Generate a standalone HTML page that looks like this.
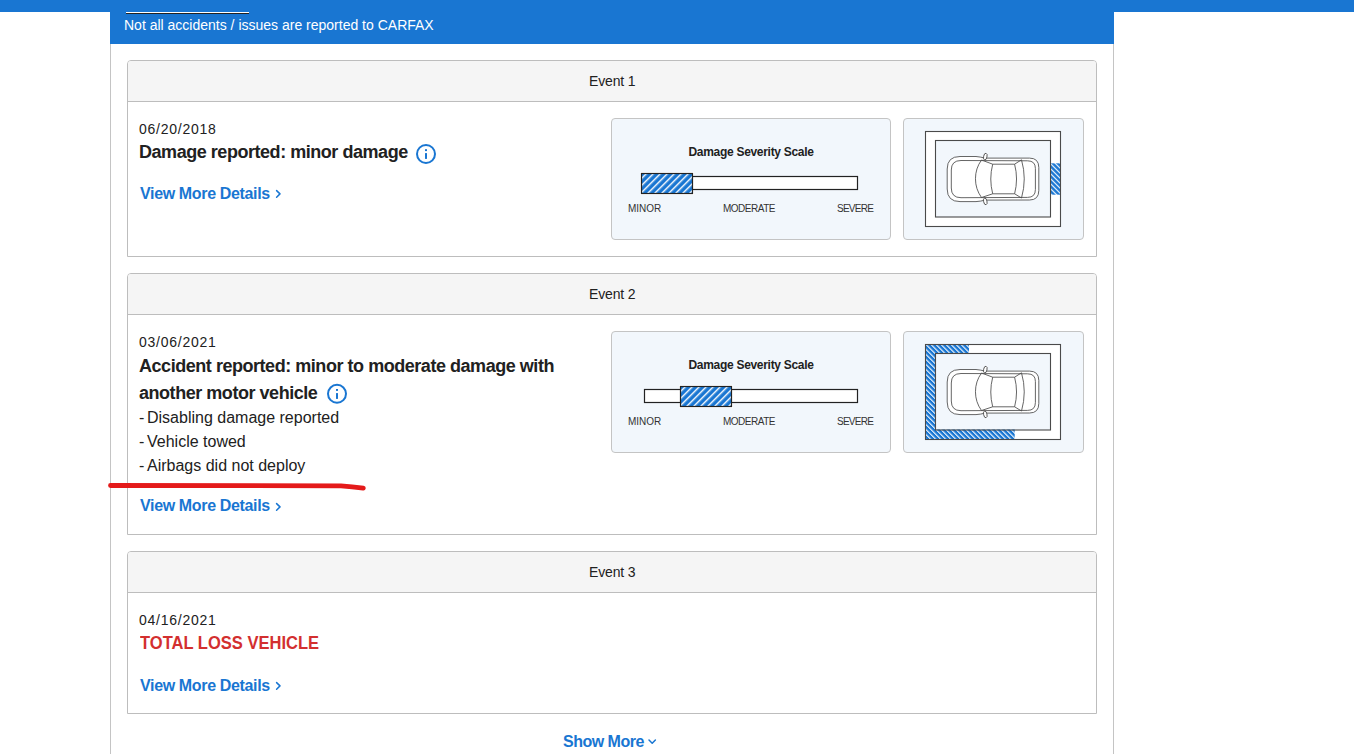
<!DOCTYPE html>
<html><head><meta charset="utf-8">
<style>
*{box-sizing:border-box;margin:0;padding:0}
html,body{width:1354px;height:754px;overflow:hidden;background:#fff;font-family:"Liberation Sans",sans-serif;color:#212121}
.a{position:absolute;white-space:nowrap;line-height:1}
.topbar{position:absolute;left:0;top:0;width:1354px;height:12px;background:#1976d2}
.container{position:absolute;left:110px;top:0;width:1004px;height:800px;border-left:1px solid #c4c4c4;border-right:1px solid #c4c4c4}
.banner{position:absolute;left:110px;top:0;width:1004px;height:44px;background:#1976d2}
.card{position:absolute;left:127px;width:970px;border:1px solid #bdbdbd;border-radius:4px 4px 0 0;background:#fff}
.card .hd{height:41px;background:#f5f5f5;border-bottom:1px solid #bdbdbd;border-radius:3px 3px 0 0}
.sev{position:absolute;left:611px;width:280px;height:122px;background:#f2f7fc;border:1px solid #c4c4c4;border-radius:4px}
.diag{position:absolute;left:903px;width:181px;height:122px;background:#f2f7fc;border:1px solid #c4c4c4;border-radius:4px}
.ev{font-size:14px;color:#212121;left:589px;letter-spacing:-0.15px}
.date{font-size:14px;letter-spacing:0.75px;left:139px}
.title{font-size:18px;font-weight:bold;letter-spacing:-0.46px;left:139px}
.vmd{font-size:16px;font-weight:bold;color:#1976d2;left:140px;letter-spacing:-0.35px}
.bul{font-size:16px}
.sst{font-size:12px;font-weight:bold;left:688.5px;letter-spacing:-0.3px}
.lbl{font-size:10px;color:#333}
svg{position:absolute;left:0;top:0}
</style></head><body>
<div class="container"></div>
<div class="topbar"></div>
<div class="banner"></div>
<div class="a" style="left:126px;top:12px;width:123px;height:1px;background:#fff"></div>
<div class="a" style="left:126px;top:13px;width:123px;height:1px;background:#222"></div>
<div class="a" style="left:124px;top:18px;font-size:14px;color:#fff">Not all accidents / issues are reported to CARFAX</div>

<div class="card" style="top:60px;height:197px"><div class="hd"></div></div>
<div class="card" style="top:273px;height:262px"><div class="hd"></div></div>
<div class="card" style="top:551px;height:163px"><div class="hd"></div></div>

<div class="sev" style="top:118px"></div>
<div class="diag" style="top:118px"></div>
<div class="sev" style="top:331px"></div>
<div class="diag" style="top:331px"></div>

<div class="a ev" style="top:74px">Event 1</div>
<div class="a ev" style="top:287px">Event 2</div>
<div class="a ev" style="top:565px">Event 3</div>

<div class="a date" style="top:122px">06/20/2018</div>
<div class="a title" style="top:143px">Damage reported: minor damage</div>
<div class="a vmd" style="top:186px">View More Details</div>

<div class="a date" style="top:335px">03/06/2021</div>
<div class="a title" style="top:357px">Accident reported: minor to moderate damage with</div>
<div class="a title" style="top:384px">another motor vehicle</div>
<div class="a bul" style="left:139px;top:410px">-</div><div class="a bul" style="left:147px;top:410px">Disabling damage reported</div>
<div class="a bul" style="left:139px;top:434px">-</div><div class="a bul" style="left:147px;top:434px">Vehicle towed</div>
<div class="a bul" style="left:139px;top:458px">-</div><div class="a bul" style="left:147px;top:458px">Airbags did not deploy</div>
<div class="a vmd" style="top:498px">View More Details</div>

<div class="a date" style="top:613px">04/16/2021</div>
<div class="a title" style="left:140px;top:634px;color:#d32f2f;letter-spacing:0;transform:scaleX(0.918);transform-origin:0 0">TOTAL LOSS VEHICLE</div>
<div class="a vmd" style="top:678px">View More Details</div>

<div class="a vmd" style="left:563px;top:734px;letter-spacing:-0.5px">Show More</div>

<div class="a sst" style="top:146px">Damage Severity Scale</div>
<div class="a lbl" style="left:628px;top:204px">MINOR</div>
<div class="a lbl" style="left:723px;top:204px;letter-spacing:-0.5px">MODERATE</div>
<div class="a lbl" style="left:837px;top:204px;letter-spacing:-0.75px">SEVERE</div>
<div class="a sst" style="top:359px">Damage Severity Scale</div>
<div class="a lbl" style="left:628px;top:417px">MINOR</div>
<div class="a lbl" style="left:723px;top:417px;letter-spacing:-0.5px">MODERATE</div>
<div class="a lbl" style="left:837px;top:417px;letter-spacing:-0.75px">SEVERE</div>


<svg width="1354" height="754" viewBox="0 0 1354 754">
<defs>
<pattern id="hb" patternUnits="userSpaceOnUse" width="4.95" height="10" patternTransform="rotate(45)">
<rect x="0" y="0" width="4.95" height="10" fill="#1976d2"/><rect x="0" y="0" width="1.4" height="10" fill="#fff"/>
</pattern>
<pattern id="hd" patternUnits="userSpaceOnUse" width="3.54" height="10" patternTransform="rotate(-45)">
<rect x="0" y="0" width="3.54" height="10" fill="#1976d2"/><rect x="0" y="0" width="1.1" height="10" fill="#fff"/>
</pattern>
<g id="car" fill="none" stroke="#4a4a4a" stroke-width="0.85">
<path fill="#fff" d="M960,156.5 L976,156.5 Q981,157 985,158.1 L1029.5,158.1 Q1038.8,158.1 1038.8,167.5 L1038.8,190.5 Q1038.8,200 1029.5,200 L985,200.1 Q981,201.3 976,201.6 L960,201.6 Q947.2,201.6 947.2,189 L947.2,169 Q947.2,156.5 960,156.5 Z"/>
<path d="M961,160.5 L1027.5,160.8 Q1035.4,160.8 1035.4,168.5 L1035.4,189.5 Q1035.4,197.4 1027.5,197.4 L961,197.7 Q951.3,197.7 951.3,188 L951.3,170 Q951.3,160.5 961,160.5 Z"/>
<path d="M981.5,160 A32.1,32.1 0 0 0 981.5,197.5"/>
<path d="M981.5,160 L992.7,164.2 M981.5,197.5 L992.7,193.8"/>
<path d="M992.7,164.2 A58.6,58.6 0 0 0 992.7,193.8 L1014.6,193.8 A58.6,58.6 0 0 0 1014.6,164.2 Z"/>
<path d="M1014.6,164.2 L1021.5,159.8 M1014.6,193.8 L1021.5,198"/>
<path d="M1021.5,159.8 A68.9,68.9 0 0 1 1021.5,198"/>
<ellipse cx="985.3" cy="156.6" rx="1.7" ry="3.4" fill="#fff" transform="rotate(12 985.3 156.6)"/>
<ellipse cx="985.3" cy="201.4" rx="1.7" ry="3.4" fill="#fff" transform="rotate(-12 985.3 201.4)"/>
</g>
</defs>

<!-- info icons -->
<g fill="none" stroke="#1976d2" stroke-width="2">
<circle cx="426" cy="154" r="9"/>
<circle cx="337" cy="393.8" r="9"/>
</g>
<g fill="#1976d2">
<rect x="425" y="149.2" width="2" height="1.9"/><rect x="425" y="153.1" width="2" height="5.8"/>
<rect x="336" y="389" width="2" height="1.9"/><rect x="336" y="393.1" width="2" height="5.8"/>
</g>
<!-- chevrons -->
<g fill="none" stroke="#1976d2" stroke-width="1.5" stroke-linecap="round" stroke-linejoin="round">
<path d="M276.6,190.6 L280,193.9 L276.6,197.2"/>
<path d="M276.6,503.6 L280,506.9 L276.6,510.2"/>
<path d="M276.6,682.6 L280,685.9 L276.6,689.2"/>
<path d="M649,740 L652.2,743.2 L655.4,740" stroke-width="1.5"/>
</g>

<!-- severity bars -->
<g stroke="#222" stroke-width="1.2">
<rect x="641.5" y="173.5" width="51" height="20" fill="#fff" stroke="#fff" stroke-width="3"/>
<rect x="644.5" y="176.5" width="213" height="13" fill="#fff"/>
<rect x="641.5" y="173.5" width="51" height="20" fill="url(#hb)"/>
<rect x="680.5" y="386.5" width="51" height="20" fill="#fff" stroke="#fff" stroke-width="3"/>
<rect x="644.5" y="389.5" width="213" height="13" fill="#fff"/>
<rect x="680.5" y="386.5" width="51" height="20" fill="url(#hb)"/>
</g>

<!-- diagram 1 -->
<rect x="925.5" y="131.5" width="135" height="95" fill="#fff"/>
<rect x="935.5" y="140.5" width="115" height="76.5" fill="#f2f7fc"/>
<rect x="1050.5" y="163.3" width="10" height="31.4" fill="url(#hd)"/>
<g fill="none" stroke="#4a4a4a" stroke-width="1.1">
<rect x="925.5" y="131.5" width="135" height="95"/>
<rect x="935.5" y="140.5" width="115" height="76.5"/>
</g>
<use href="#car"/>

<!-- diagram 2 -->
<rect x="925.5" y="344.5" width="135" height="95" fill="#fff"/>
<rect x="935.5" y="353.5" width="115" height="76.5" fill="#f2f7fc"/>
<rect x="925.5" y="344.5" width="43.5" height="9" fill="url(#hd)"/>
<rect x="925.5" y="344.5" width="10" height="95" fill="url(#hd)"/>
<rect x="925.5" y="429.5" width="89.2" height="10" fill="url(#hd)"/>
<g fill="none" stroke="#4a4a4a" stroke-width="1.1">
<rect x="925.5" y="344.5" width="135" height="95"/>
<rect x="935.5" y="353.5" width="115" height="76.5"/>
</g>
<use href="#car" transform="translate(0,213)"/>

<!-- red annotation -->
<path d="M110.5,485.5 L341,485.8 Q352,486.6 363.3,488.2" fill="none" stroke="#e41a1a" stroke-width="4.8" stroke-linecap="round" stroke-linejoin="round"/>
</svg>
</body></html>
